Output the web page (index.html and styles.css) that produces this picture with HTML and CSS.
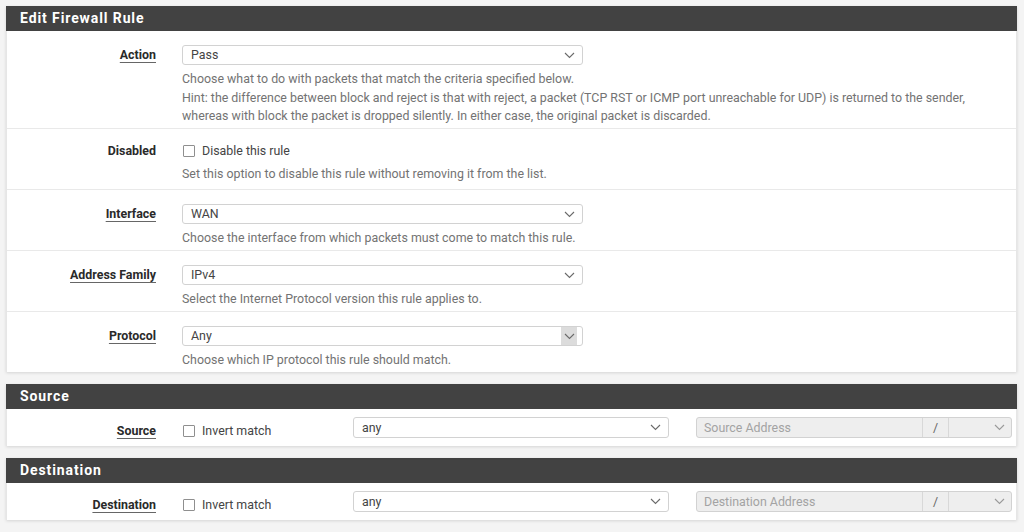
FILE: index.html
```html
<!DOCTYPE html>
<html>
<head>
<meta charset="utf-8">
<link rel="stylesheet" href="styles.css">
</head>
<body>
<div class="page">
  <div class="panel">
    <div class="panel-heading">Edit Firewall Rule</div>
    <div class="panel-body">
      <div class="row">
        <div class="label"><span class="req">Action</span></div>
        <div class="ctl">
          <div class="select"><span>Pass</span><svg class="chev" width="11" height="7" viewBox="0 0 11 7"><polyline points="1,1 5.5,5.5 10,1"/></svg></div>
          <div class="help">Choose what to do with packets that match the criteria specified below.<br>Hint: the difference between block and reject is that with reject, a packet (TCP RST or ICMP port unreachable for UDP) is returned to the sender,<br>whereas with block the packet is dropped silently. In either case, the original packet is discarded.</div>
        </div>
      </div>
      <div class="row row-check">
        <div class="label"><span>Disabled</span></div>
        <div class="ctl">
          <div class="check"><span class="box"></span>Disable this rule</div>
          <div class="help">Set this option to disable this rule without removing it from the list.</div>
        </div>
      </div>
      <div class="row">
        <div class="label"><span class="req">Interface</span></div>
        <div class="ctl">
          <div class="select"><span>WAN</span><svg class="chev" width="11" height="7" viewBox="0 0 11 7"><polyline points="1,1 5.5,5.5 10,1"/></svg></div>
          <div class="help">Choose the interface from which packets must come to match this rule.</div>
        </div>
      </div>
      <div class="row">
        <div class="label"><span class="req">Address Family</span></div>
        <div class="ctl">
          <div class="select"><span>IPv4</span><svg class="chev" width="11" height="7" viewBox="0 0 11 7"><polyline points="1,1 5.5,5.5 10,1"/></svg></div>
          <div class="help">Select the Internet Protocol version this rule applies to.</div>
        </div>
      </div>
      <div class="row last">
        <div class="label"><span class="req">Protocol</span></div>
        <div class="ctl">
          <div class="select hover"><span>Any</span><span class="arrowbtn"><svg class="chev" width="11" height="7" viewBox="0 0 11 7"><polyline points="1,1 5.5,5.5 10,1"/></svg></span></div>
          <div class="help">Choose which IP protocol this rule should match.</div>
        </div>
      </div>
    </div>
  </div>

  <div class="panel">
    <div class="panel-heading">Source</div>
    <div class="panel-body">
      <div class="row row-inline">
        <div class="label"><span class="req">Source</span></div>
        <div class="check-col"><div class="check"><span class="box"></span>Invert match</div></div>
        <div class="select wide"><span>any</span><svg class="chev" width="11" height="7" viewBox="0 0 11 7"><polyline points="1,1 5.5,5.5 10,1"/></svg></div>
        <div class="addr">
          <span class="ph">Source Address</span>
          <span class="slash">/</span>
          <span class="mask"><svg class="chev light" width="11" height="7" viewBox="0 0 11 7"><polyline points="1,1 5.5,5.5 10,1"/></svg></span>
        </div>
      </div>
    </div>
  </div>

  <div class="panel">
    <div class="panel-heading">Destination</div>
    <div class="panel-body">
      <div class="row row-inline">
        <div class="label"><span class="req">Destination</span></div>
        <div class="check-col"><div class="check"><span class="box"></span>Invert match</div></div>
        <div class="select wide"><span>any</span><svg class="chev" width="11" height="7" viewBox="0 0 11 7"><polyline points="1,1 5.5,5.5 10,1"/></svg></div>
        <div class="addr">
          <span class="ph">Destination Address</span>
          <span class="slash">/</span>
          <span class="mask"><svg class="chev light" width="11" height="7" viewBox="0 0 11 7"><polyline points="1,1 5.5,5.5 10,1"/></svg></span>
        </div>
      </div>
    </div>
  </div>
</div>
</body>
</html>
```

FILE: styles.css
```css
html, body {
  margin: 0;
  padding: 0;
  background: #f4f4f4;
  font-family: Roboto, "Liberation Sans", Arial, sans-serif;
  font-size: 12.4px;
  color: #555;
}
.page {
  padding: 6px 7px 0 6px;
}
.panel {
  background: #fff;
  margin-bottom: 12px;
  box-shadow: 0 1px 3px rgba(0,0,0,0.13);
}
.panel-heading {
  background: #424242;
  color: #fff;
  font-weight: 700;
  font-size: 14px;
  letter-spacing: 0.9px;
  height: 25px;
  line-height: 25px;
  padding-left: 14px;
}
.panel-body {
  border-left: 1px solid #e6e6e6;
  border-right: 1px solid #e6e6e6;
}
.row {
  display: flex;
  padding: 14px 0 2.5px 0;
  border-bottom: 1px solid #e9e9e9;
}
.row.last { border-bottom: none; }
.row-check { padding-top: 12px; padding-bottom: 5.5px; }
.label {
  width: 149px;
  flex: none;
  text-align: right;
  font-weight: 700;
  color: #2a2a2a;
  height: 20px;
  line-height: 20px;
  margin-right: 26px;
}
.req {
  text-decoration: underline;
  text-decoration-color: #666;
  text-underline-offset: 3px;
}
.ctl { display: flex; flex-direction: column; }
.select {
  position: relative;
  width: 399px;
  height: 18px;
  border: 1px solid #d2d2d2;
  border-radius: 3px;
  background: #fff;
  color: #444;
  line-height: 18px;
  padding: 0;
  display: flex;
  align-items: center;
}
.select > span:first-child { padding-left: 8px; flex: 1; }
.chev { fill: none; stroke: #6a6a6a; stroke-width: 1.1; margin-right: 7px; }
.chev.light { stroke: #9a9a9a; }
.arrowbtn {
  width: 16px;
  height: 18px;
  background: #dcdcdc;
  margin-right: 5px;
  display: flex;
  align-items: center;
  justify-content: center;
}
.arrowbtn .chev { margin-right: 0; }
.help {
  margin-top: 5px;
  line-height: 18.5px;
  color: #737373;
}
.row-check .help { margin-top: 4px; }
.check {
  height: 20px;
  line-height: 20px;
  display: flex;
  align-items: center;
  color: #444;
}
.box {
  width: 10px;
  height: 10px;
  border: 1px solid #8f8f8f;
  border-radius: 1px;
  background: #fff;
  margin: 0 7px 0 1px;
}
.row-inline {
  padding: 8px 0 7px 0;
  border-bottom: none;
  align-items: flex-start;
}
.row-inline .label { margin-top: 6px; height: 16px; line-height: 16px; }
.row-inline .select { height: 19px; line-height: 19px; }
.check-col { width: 171px; flex: none; margin-top: 6px; }
.check-col .check { height: 16px; line-height: 16px; }
.select.wide { width: 314px; margin-right: 27px; }
.addr {
  width: 314px;
  height: 19px;
  border: 1px solid #d2d2d2;
  border-radius: 3px;
  background: #eeeeee;
  display: flex;
  align-items: stretch;
  line-height: 19px;
}
.ph { flex: 1; padding-left: 7px; color: #a3a3a3; }
.slash {
  width: 25px;
  border-left: 1px solid #d8d8d8;
  border-right: 1px solid #d8d8d8;
  text-align: center;
  color: #666;
}
.mask {
  width: 62px;
  display: flex;
  align-items: center;
  justify-content: flex-end;
}
.mask .chev { margin-right: 6px; }
```
